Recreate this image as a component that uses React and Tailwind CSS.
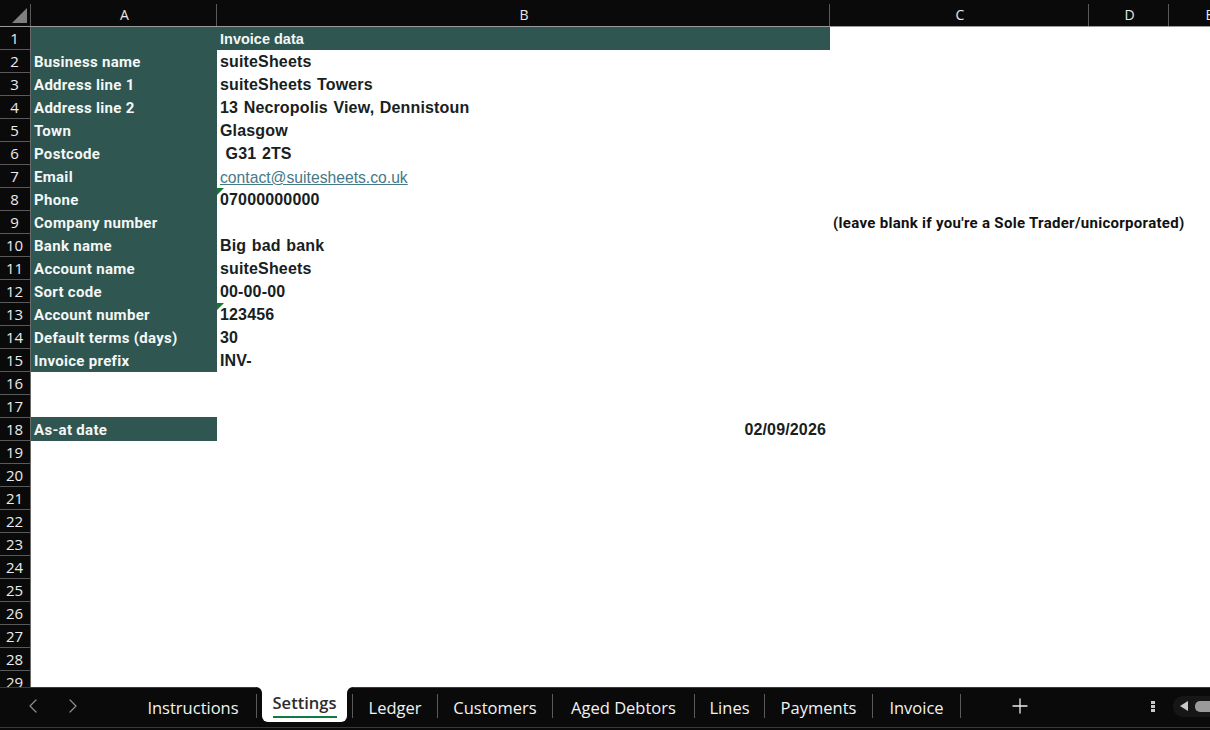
import {ChevronLeft, ChevronRight, Plus} from 'lucide-react';

const sheetFont = "font-['Roboto','Liberation_Sans',sans-serif]";
const dataFont = "font-['Liberation_Sans',Arial,sans-serif]";
const uiFont = "font-['Open_Sans','Noto_Sans',sans-serif]";

const columns = [
    {label: 'A', width: 'w-[186px]'},
    {label: 'B', width: 'w-[613px]'},
    {label: 'C', width: 'w-[259px]'},
    {label: 'D', width: 'w-[80px]'},
    {label: 'E', width: 'w-[80px]'}
];

// Row data: label goes in column A, value goes in column B
const rows = [
    {n: 1, label: '', value: 'Invoice data', header: true},
    {n: 2, label: 'Business name', value: 'suiteSheets'},
    {n: 3, label: 'Address line 1', value: 'suiteSheets Towers'},
    {n: 4, label: 'Address line 2', value: '13 Necropolis View, Dennistoun'},
    {n: 5, label: 'Town', value: 'Glasgow'},
    {n: 6, label: 'Postcode', value: '\u00a0G31 2TS'},
    {n: 7, label: 'Email', value: 'contact@suitesheets.co.uk', link: true},
    {n: 8, label: 'Phone', value: '07000000000', flag: true},
    {n: 9, label: 'Company number', value: '', note: "(leave blank if you're a Sole Trader/unicorporated)"},
    {n: 10, label: 'Bank name', value: 'Big bad bank'},
    {n: 11, label: 'Account name', value: 'suiteSheets'},
    {n: 12, label: 'Sort code', value: '00-00-00'},
    {n: 13, label: 'Account number', value: '123456', flag: true},
    {n: 14, label: 'Default terms (days)', value: '30'},
    {n: 15, label: 'Invoice prefix', value: 'INV-'},
    {n: 16},
    {n: 17},
    {n: 18, label: 'As-at date', value: '02/09/2026', right: true, tall: true},
    ...Array.from({length: 11}, (_, i) => ({n: 19 + i}))
];

const tabs = [
    {label: 'Ledger', width: 'w-[86px] border-l'},
    {label: 'Customers', width: 'w-[115px]'},
    {label: 'Aged Debtors', width: 'w-[142px]'},
    {label: 'Lines', width: 'w-[70px]'},
    {label: 'Payments', width: 'w-[108px]'},
    {label: 'Invoice', width: 'w-[88px]'}
];

const ColumnHeader = () => (
    <div className={`flex h-[27px] shrink-0 border-b border-[#9a9a9a] bg-[#0a0a0a] ${uiFont}`}>
        <div className="relative mt-[4px] w-[31px] shrink-0 border-r border-[#5a5a5a]">
            <svg className="absolute left-[12px] top-[4px]" width="15" height="15" viewBox="0 0 15 15">
                <path d="M15 0V15H0Z" fill="#7f7f7f"/>
            </svg>
        </div>
        {columns.map((col) => (
            <div
                key={col.label}
                className={`${col.width} mt-[4px] shrink-0 border-r border-[#5a5a5a] pl-[2px] text-center text-[14px] leading-[22px] text-[#e8e8e8]`}
            >
                {col.label}
            </div>
        ))}
    </div>
);

const Row = ({row}) => {
    const hasLabel = row.label !== undefined;

    return (
        <div className="flex h-[23px] shrink-0">
            <div className={`w-[31px] shrink-0 border-r border-b border-r-[#6a6a6a] border-b-[#5a5a5a] bg-[#0a0a0a] pr-[1px] text-center text-[15px] leading-[23px] text-[#ececec] ${uiFont}`}>
                {row.n}
            </div>
            <div className={`w-[186px] shrink-0 whitespace-nowrap pl-[3px] text-[15px] font-bold tracking-[0.3px] text-[#f4f7f6] ${sheetFont} ${hasLabel ? 'bg-[#2f5651]' : ''} ${row.tall ? '-mt-[1px] h-[24px] leading-[27px]' : 'leading-[25px]'}`}>
                {row.label}
            </div>
            <div className={`relative w-[613px] shrink-0 whitespace-nowrap px-[3px] ${dataFont}
                ${row.header ? 'bg-[#2f5651] text-[14.5px] font-bold leading-[25px] text-[#f4f7f6]' : ''}
                ${row.link ? 'text-[15.7px] leading-[25px] text-[#467886] underline' : ''}
                ${!row.header && !row.link ? 'text-[16px] font-bold leading-[23px] tracking-[0.15px] [word-spacing:1px] text-[#17211f]' : ''}
                ${row.right ? 'pr-[4px] text-right text-[15px]' : ''}`}
            >
                {row.flag && (
                    <svg className="absolute left-0 top-0" width="7" height="7" viewBox="0 0 7 7">
                        <path d="M0 0H7L0 7Z" fill="#0e7c2f"/>
                    </svg>
                )}
                {row.value}
            </div>
            {row.note && (
                <div className={`whitespace-nowrap pl-[3px] text-[15px] font-bold leading-[25px] tracking-[0.3px] text-[#111] ${sheetFont}`}>
                    {row.note}
                </div>
            )}
        </div>
    );
};

const SheetTab = ({tab}) => (
    <div className={`${tab.width} flex h-[24px] shrink-0 items-center justify-center border-r border-[#5a5a5a] pt-[4px] text-[16.5px] leading-[20px] text-[#f2f2f2]`}>
        {tab.label}
    </div>
);

const TabBar = () => (
    <div className={`flex h-[40px] shrink-0 items-start border-t border-[#3a3a3a] bg-[#0a0a0a] ${uiFont}`}>
        <div className="flex h-[36px] w-[130px] shrink-0 items-center pl-[21px] text-[#8f8f8f]">
            <ChevronLeft size={24} strokeWidth={1.2}/>
            <ChevronRight size={24} strokeWidth={1.2} className="ml-[16px]"/>
        </div>
        <div className="flex h-[36px] items-center">
            <div className="flex h-[24px] w-[127px] shrink-0 items-center justify-center border-r border-[#5a5a5a] pt-[4px] text-[16.5px] leading-[20px] text-[#f2f2f2]">
                Instructions
            </div>
            {/* Active tab joins the white sheet above it */}
            <div className="relative ml-[5px] mr-[5px] -mt-[1px] flex h-[35px] w-[85px] shrink-0 flex-col items-center self-start rounded-b-[6px] bg-white pt-[4px] text-[#2c2c2c]">
                <span className="absolute -left-[6px] top-0 h-[6px] w-[6px] bg-white">
                    <span className="block h-full w-full rounded-tr-[6px] bg-[#0a0a0a]"/>
                </span>
                <span className="absolute -right-[6px] top-0 h-[6px] w-[6px] bg-white">
                    <span className="block h-full w-full rounded-tl-[6px] bg-[#0a0a0a]"/>
                </span>
                <span className="text-[16.5px] font-semibold leading-[24px]">Settings</span>
                <span className="mt-[1px] h-[2px] w-[64px] bg-[#107c41]"/>
            </div>
            {tabs.map((tab) => (
                <SheetTab key={tab.label} tab={tab}/>
            ))}
        </div>
        <div className="flex h-[36px] w-[190px] shrink-0 items-center pl-[47px] text-[#ececec]">
            <Plus size={24} strokeWidth={1.3}/>
        </div>
        <div className="flex h-[36px] flex-1 items-center">
            <div className="flex flex-col gap-[1px]">
                <span className="h-[3px] w-[4px] bg-[#c8c8c8]"/>
                <span className="h-[3px] w-[4px] bg-[#c8c8c8]"/>
                <span className="h-[3px] w-[4px] bg-[#c8c8c8]"/>
            </div>
            <div className="ml-[18px] flex h-[21px] flex-1 items-center rounded-l-[10px] bg-[#161616] pl-[7px]">
                <svg width="8" height="10" viewBox="0 0 8 10">
                    <path d="M8 0V10L0 5Z" fill="#c8c8c8"/>
                </svg>
                <span className="ml-[7px] h-[11px] flex-1 rounded-l-[5px] bg-[#9a9a9a]"/>
            </div>
        </div>
    </div>
);

const App = () => {
    return (
        <div className="flex h-[730px] w-[1210px] flex-col overflow-hidden bg-white">
            <ColumnHeader/>
            {/* Grid rows, the last one is cut off by the tab bar */}
            <div className="flex min-h-0 flex-1 flex-col overflow-hidden">
                {rows.map((row) => (
                    <Row key={row.n} row={row}/>
                ))}
            </div>
            <TabBar/>
            <div className="h-[3px] shrink-0 border-t border-[#3a3a3a] bg-[#0a0a0a]"/>
        </div>
    );
};

export default App;
